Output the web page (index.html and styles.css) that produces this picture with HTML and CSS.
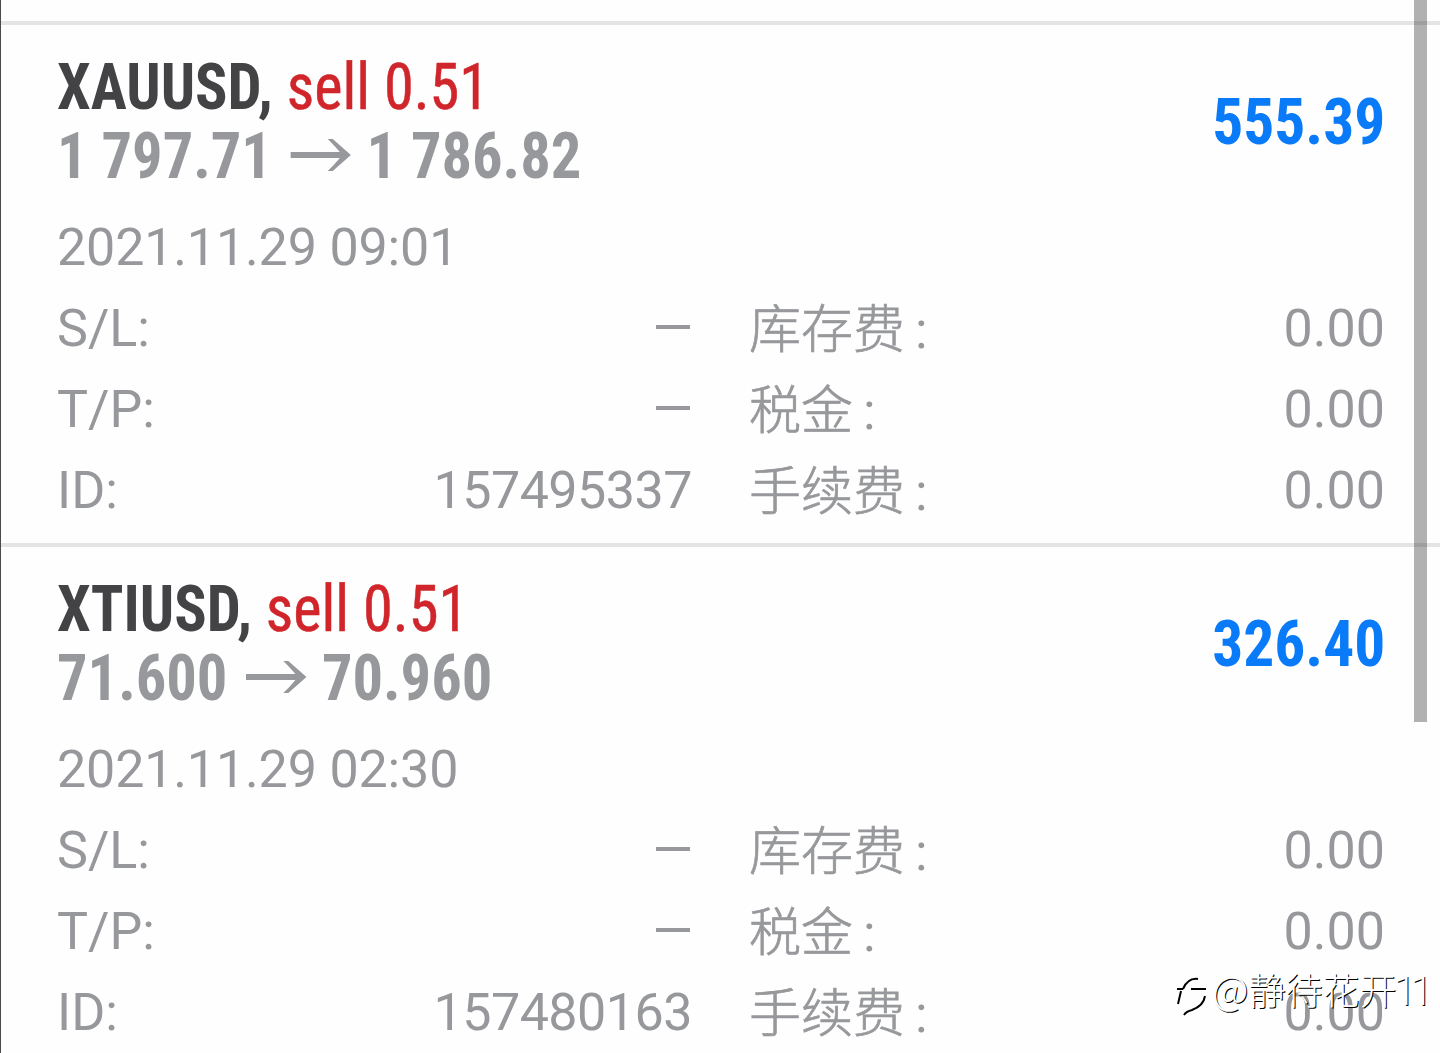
FILE: index.html
```html
<!DOCTYPE html>
<html lang="zh-CN">
<head>
<meta charset="utf-8">
<title>History</title>
<link rel="stylesheet" href="styles.css">
</head>
<body>
<main class="history">
  <article class="deal">
    <header class="summary">
      <div>
        <h2 class="title"><b>XAUUSD,</b> <span class="side">sell 0.51</span></h2>
        <p class="prices">1 797.71<svg class="arrow" viewBox="0 0 60 32" preserveAspectRatio="none"><path d="M0 13H49C45 8 41 4 37 0H42L60 16L42 32H37C41 28 45 24 49 19H0Z"/></svg>1 786.82</p>
      </div>
      <strong class="profit">555.39</strong>
    </header>
    <time class="date">2021.11.29 09:01</time>
    <dl class="details">
      <dt>S/L:</dt><dd><i class="dash"></i></dd><dt class="cn">库存费<span class="colon">:</span></dt><dd>0.00</dd>
      <dt>T/P:</dt><dd><i class="dash"></i></dd><dt class="cn">税金<span class="colon">:</span></dt><dd>0.00</dd>
      <dt>ID:</dt><dd class="ticket">157495337</dd><dt class="cn">手续费<span class="colon">:</span></dt><dd>0.00</dd>
    </dl>
  </article>
  <article class="deal">
    <header class="summary">
      <div>
        <h2 class="title"><b>XTIUSD,</b> <span class="side">sell 0.51</span></h2>
        <p class="prices">71.600<svg class="arrow" viewBox="0 0 60 32" preserveAspectRatio="none"><path d="M0 13H49C45 8 41 4 37 0H42L60 16L42 32H37C41 28 45 24 49 19H0Z"/></svg>70.960</p>
      </div>
      <strong class="profit">326.40</strong>
    </header>
    <time class="date">2021.11.29 02:30</time>
    <dl class="details">
      <dt>S/L:</dt><dd><i class="dash"></i></dd><dt class="cn">库存费<span class="colon">:</span></dt><dd>0.00</dd>
      <dt>T/P:</dt><dd><i class="dash"></i></dd><dt class="cn">税金<span class="colon">:</span></dt><dd>0.00</dd>
      <dt>ID:</dt><dd class="ticket">157480163</dd><dt class="cn">手续费<span class="colon">:</span></dt><dd>0.00</dd>
    </dl>
  </article>
</main>
<div class="scrollbar"></div>
<div class="watermark"><svg class="mark" viewBox="0 0 36 42"><path d="M4 13H10M18 13H33M10 13C13 6 18 2 25 3M8 15L5 28M11 39C13 36 15 35 19 34C27 31 31 27 32 20"/></svg><span><span class="latin">@</span>静待花开<span class="digits">11</span></span></div>
</body>
</html>
```
FILE: styles.css
```css
* { box-sizing: border-box; margin: 0; padding: 0; }
body {
  height: 1053px;
  overflow: hidden;
  position: relative;
  background: #fefefe;
  border-left: 1px solid #4a4a4c;
  font-family: Roboto, "Noto Sans CJK SC", sans-serif;
  color: #97989b;
}
.history { padding-top: 21px; }
.deal {
  height: 522px;
  border-top: 4px solid #e4e4e5;
  padding: 28px 55px 0 56px;
}
.summary {
  display: flex;
  justify-content: space-between;
  align-items: center;
  height: 138px;
  font-family: "Roboto Condensed", Roboto, sans-serif;
  font-stretch: 75%;
  font-size: 64px;
  line-height: 69px;
  white-space: nowrap;
}
.title {
  font-size: 64px;
  font-weight: 400;
  color: #434345;
  transform: scaleX(.942);
  transform-origin: left;
}
.side { color: #d0252a; -webkit-text-stroke: .5px currentColor; }
.prices { font-weight: 700; transform: scaleX(.945); transform-origin: left; }
.arrow {
  width: 64px;
  height: 32px;
  margin: 0 16px 0 20px;
  vertical-align: 7px;
  fill: currentColor;
}
.profit { color: #0a7bf8; transform: scaleX(.96); transform-origin: right; }
.date { display: block; height: 97px; padding-top: 16px; font-size: 52px; line-height: 81px; letter-spacing: -.15px; }
.details {
  display: grid;
  grid-template-columns: 200px 434px 300px 1fr;
  grid-auto-rows: 81px;
  font-size: 52px;
  line-height: 82px;
}
.details dd { text-align: right; }
.details .ticket { letter-spacing: -.5px; position: relative; left: 1px; }
.details .cn {
  padding-left: 58px;
  font-family: "Noto Sans CJK SC", sans-serif;
  font-weight: 300;
  line-height: 75px;
  -webkit-text-stroke: .7px currentColor;
}
.colon { margin-left: 10px; font-family: Roboto, sans-serif; font-weight: 400; -webkit-text-stroke: 0; }
.dash { display: inline-block; width: 34px; height: 4px; margin-right: 1px; background: currentColor; vertical-align: 17px; }
.scrollbar { position: absolute; top: 0; left: 1413px; width: 13px; height: 722px; background: rgba(0,0,0,.3); }
.watermark {
  position: absolute;
  left: 1172px;
  top: 961px;
  display: flex;
  font-family: "Noto Sans CJK SC", sans-serif;
  font-weight: 300;
  font-size: 37px;
  line-height: 54px;
  color: #fff;
  white-space: nowrap;
  text-shadow: 1px 1px 0 #000;
}
.latin { font-size: 40px; }
.digits { margin-left: -3px; font-family: Roboto, sans-serif; font-size: 41px; letter-spacing: -6px; }
.mark { width: 36px; height: 42px; margin: 15px 3px 0 0; fill: none; stroke: #000; stroke-width: 2; }
```
